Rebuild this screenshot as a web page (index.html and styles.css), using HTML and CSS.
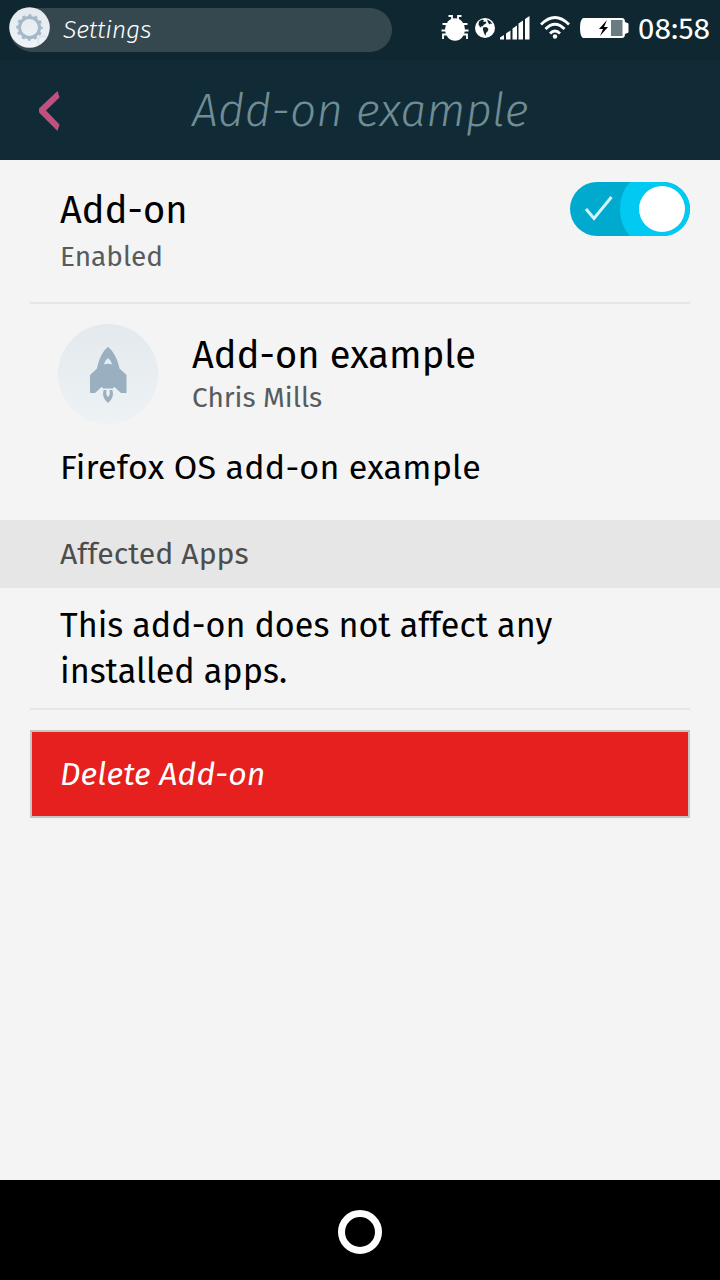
FILE: index.html
```html
<!DOCTYPE html>
<html lang="en">
<head>
<meta charset="utf-8">
<title>Add-on example</title>
<link rel="stylesheet" href="styles.css">
</head>
<body>
<div class="statusbar">
  <div class="app-pill">
    <svg class="app-icon" width="42" height="42" viewBox="0 0 42 42">
      <defs>
        <linearGradient id="disc" x2="0" y2="1"><stop stop-color="#e4e9ee"/><stop offset="1" stop-color="#eef3f6"/></linearGradient>
        <clipPath id="disc-clip"><circle cx="20.500" cy="20.500" r="20.300"/></clipPath>
      </defs>
      <circle cx="20.500" cy="20.500" r="20.300" fill="url(#disc)"/>
      <circle cx="34" cy="34" r="5" fill="none" stroke="#dde5eb" stroke-width="2" clip-path="url(#disc-clip)"/>
      <circle cx="20.500" cy="20.500" r="10" fill="none" stroke="#a3b8c8" stroke-width="3"/>
      <circle cx="20.500" cy="20.500" r="12" fill="none" stroke="#a3b8c8" stroke-width="2.400" stroke-dasharray="3.142 3.142" stroke-dashoffset="1.500"/>
    </svg>
    <span class="app-name">Settings</span>
  </div>
  <div class="indicators">
    <svg width="28" height="28" viewBox="0 0 28 28" fill="none" stroke="#fff" stroke-width="1.800">
      <ellipse cx="14" cy="15.500" rx="10" ry="11.300" fill="#fff" stroke="none"/>
      <path d="M7.500 2h3.500v5M20.500 2h-3.500v5M6 13.500V10H1.500M22 13.500V10h4.500M6 16.500H.5M22 16.500h5.500M6 20.500H2v4.500M22 20.500h4v4.500"/>
    </svg>
    <svg class="globe" width="20" height="20" viewBox="0 0 20 20">
      <circle cx="10" cy="10" r="10" fill="#fff"/>
      <path fill="#0e2730" d="M4 3.500 7 1.500l2 1L8 4l2.500-.5 1 1.500L8.500 7 7.500 8.500 6 8l.5 1.500L5 9 3.500 6.500zM12 1.500l3 1.500 2.500 3-2-.5-1 1-1.500-2zM8 9.500l3.500-.5 2 2-1 2.500-1.500 1.500-.5 3L9 15l-1-3z"/>
    </svg>
    <svg class="signal" width="30" height="24" viewBox="0 0 30 24" fill="#fff">
      <path d="M0 23.500V21.500l4-2.500v4.500zM6 23.500V17.500l4.500-3v9zM12.500 23.500V12.500l4.500-3v14zM18.500 23.500V7.500l4.500-3v19zM25 23.500V3l4.500-3v23.500z"/>
    </svg>
    <svg class="wifi" width="30" height="24" viewBox="0 0 30 24" fill="none" stroke="#fff" stroke-width="2.800">
      <path d="M1 8.500Q15-5.500 29 8.500M5.500 13Q15 3.500 24.500 13M10 17.500Q15 12.500 20 17.500"/>
      <circle cx="15" cy="20.500" r="2.200" fill="#fff" stroke="none"/>
    </svg>
    <svg class="battery" width="49" height="20" viewBox="0 0 49 20">
      <path fill="#fff" d="M3 0h39q3 0 3 4l3.500 1.500v9L45 16q0 4-3 4H3Q0 18 0 10T3 0z"/>
      <path fill="#6a7b83" d="M31 2h11.500v16H31z"/>
      <path fill="#000" d="M27 2 19 11h4l-3 7 8-9h-4z"/>
    </svg>
    <span class="clock">08:58</span>
  </div>
</div>
<header class="header">
  <svg class="back" width="22" height="40" viewBox="0 0 22 40"><path fill="#c14f80" d="M18.500 0 .5 17Q-1 19.500 .5 22L18.500 40 20.500 33.500 7 19.500 20.500 6.500z"/></svg>
  <h1 class="title">Add-on example</h1>
</header>
<main class="main">
  <section class="toggle-row">
    <div class="toggle-text">
      <div class="name">Add-on</div>
      <div class="sub sub-state">Enabled</div>
    </div>
    <svg class="switch" width="120" height="54" viewBox="0 0 120 54">
      <defs><clipPath id="track"><rect width="120" height="54" rx="27"/></clipPath></defs>
      <g clip-path="url(#track)">
        <path fill="#00aacf" d="M0 0h120v54H0z"/>
        <path fill="#00caf2" d="M60 0Q50 11 50 27t10 27h60V0z"/>
      </g>
      <circle cx="92" cy="27" r="23" fill="#fff"/>
      <path d="m16 27 8 9.500L41.500 15" fill="none" stroke="#d5f4fa" stroke-width="3"/>
    </svg>
  </section>
  <section class="info-row">
    <svg class="rocket" width="100" height="100" viewBox="0 0 100 100">
      <defs><linearGradient id="disc-large" x2="0" y2="1"><stop stop-color="#e4e9ed"/><stop offset="1" stop-color="#edf2f5"/></linearGradient></defs>
      <circle cx="50" cy="50" r="50" fill="url(#disc-large)"/>
      <path fill="#9aafc0" fill-rule="evenodd" d="M50 23c5 3 10 13 11.500 21.500L68.500 51v18h-5.500l-6.500-6-2 1.500h-9l-2-1.500-6.500 6H32V51l7-6.500C40.500 36 45 26 50 23zM50 34q-3 2-4 6.500 4-1.500 8 0-1-4.500-4-6.500z"/>
      <path fill="#9aafc0" d="M45.500 66H48.500q-1 5 1.500 7 2.500-2 1.500-7H54.500q2 8-4.500 13-6.500-5-4.500-13z"/>
    </svg>
    <div class="info-text">
      <div class="name">Add-on example</div>
      <div class="sub sub-author">Chris Mills</div>
    </div>
  </section>
  <p class="description">Firefox OS add-on example</p>
  <h2 class="section-title">Affected Apps</h2>
  <p class="affected">This add-on does not affect any<br>installed apps.</p>
  <button class="delete">Delete Add-on</button>
</main>
<footer class="softkeys"><div class="home"></div></footer>
</body>
</html>
```
FILE: styles.css
```css
* { box-sizing: border-box; }
body {
  margin: 0;
  width: 720px;
  height: 1280px;
  display: flex;
  flex-direction: column;
  background: #f4f4f4;
  color: #000;
  font-family: "Fira Sans", "Noto Sans", sans-serif;
  overflow: hidden;
}
h1, h2, p { margin: 0; font-weight: 400; }
svg { display: block; flex: none; }
.name, .sub, .title, .app-name, .clock, .description, .section-title, .affected, .delete { white-space: nowrap; }

.statusbar {
  height: 60px;
  flex: none;
  display: flex;
  justify-content: space-between;
  align-items: flex-start;
  padding: 8px 10px 0 10px;
  background: #0e2730;
  color: #fff;
}
.app-pill {
  width: 382px;
  height: 44px;
  border-radius: 22px;
  background: #35484f;
  display: flex;
  align-items: flex-start;
}
.app-icon { margin: -1px 0 0 -1px; }
.app-name {
  margin-left: 12px;
  font: italic 300 25px/44px "Fira Sans", "Open Sans", sans-serif;
  letter-spacing: -0.25px;
}
.indicators { display: flex; align-items: center; height: 40px; }
.globe { margin-left: 6px; }
.signal { margin-left: 5px; }
.wifi { margin-left: 10px; }
.battery { margin-left: 10px; }
.clock { margin-left: 9px; padding-top: 1px; font-size: 30px; line-height: 40px; }

.header {
  height: 100px;
  flex: none;
  display: flex;
  align-items: center;
  padding: 1px 0 0 39px;
  background: #102b36;
}
.title {
  margin: 1px 0 0 131px;
  font: italic 300 46px/60px "Fira Sans", "Open Sans", sans-serif;
  letter-spacing: 0.15px;
  color: #708d95;
}

.main { flex: 1; }
.toggle-row {
  height: 144px;
  margin: 0 30px;
  padding: 22px 0 0 30px;
  border-bottom: 2px solid #e6e6e3;
  display: flex;
  justify-content: space-between;
}
.toggle-text { padding-top: 5px; }
.name { font-size: 38px; line-height: 46px; letter-spacing: 0.1px; }
.sub { font-size: 28px; line-height: 36px; color: #545c5e; }
.sub-state { margin-top: 6px; }
.sub-author { margin-top: 2px; }
.info-row { display: flex; padding: 20px 0 0 58px; height: 140px; }
.info-text { margin: 8px 0 0 34px; }
.description { padding: 1px 0 0 60px; font-size: 34px; line-height: 46px; height: 76px; letter-spacing: 0.24px; }
.section-title {
  height: 68px;
  padding-left: 60px;
  background: #e6e6e6;
  color: #4d4d4d;
  font-size: 30.25px;
  line-height: 68px;
}
.affected {
  height: 122px;
  margin: 0 30px 20px;
  padding: 15px 0 0 30px;
  border-bottom: 2px solid #e6e6e3;
  font-size: 34.15px;
  line-height: 46px;
}
.delete {
  display: block;
  width: 660px;
  height: 88px;
  margin: 0 30px;
  padding: 0 0 0 28px;
  border: 2px solid #c5c5c5;
  background: #e5201e;
  color: #fff;
  text-align: left;
  font: italic 400 32px/84px "Fira Sans", "Noto Sans", sans-serif;
  letter-spacing: 0.15px;
}
.softkeys {
  height: 100px;
  flex: none;
  background: #000;
  display: flex;
  justify-content: center;
  padding-top: 30px;
}
.home { width: 44px; height: 44px; border: 7px solid #fff; border-radius: 50%; }
```
